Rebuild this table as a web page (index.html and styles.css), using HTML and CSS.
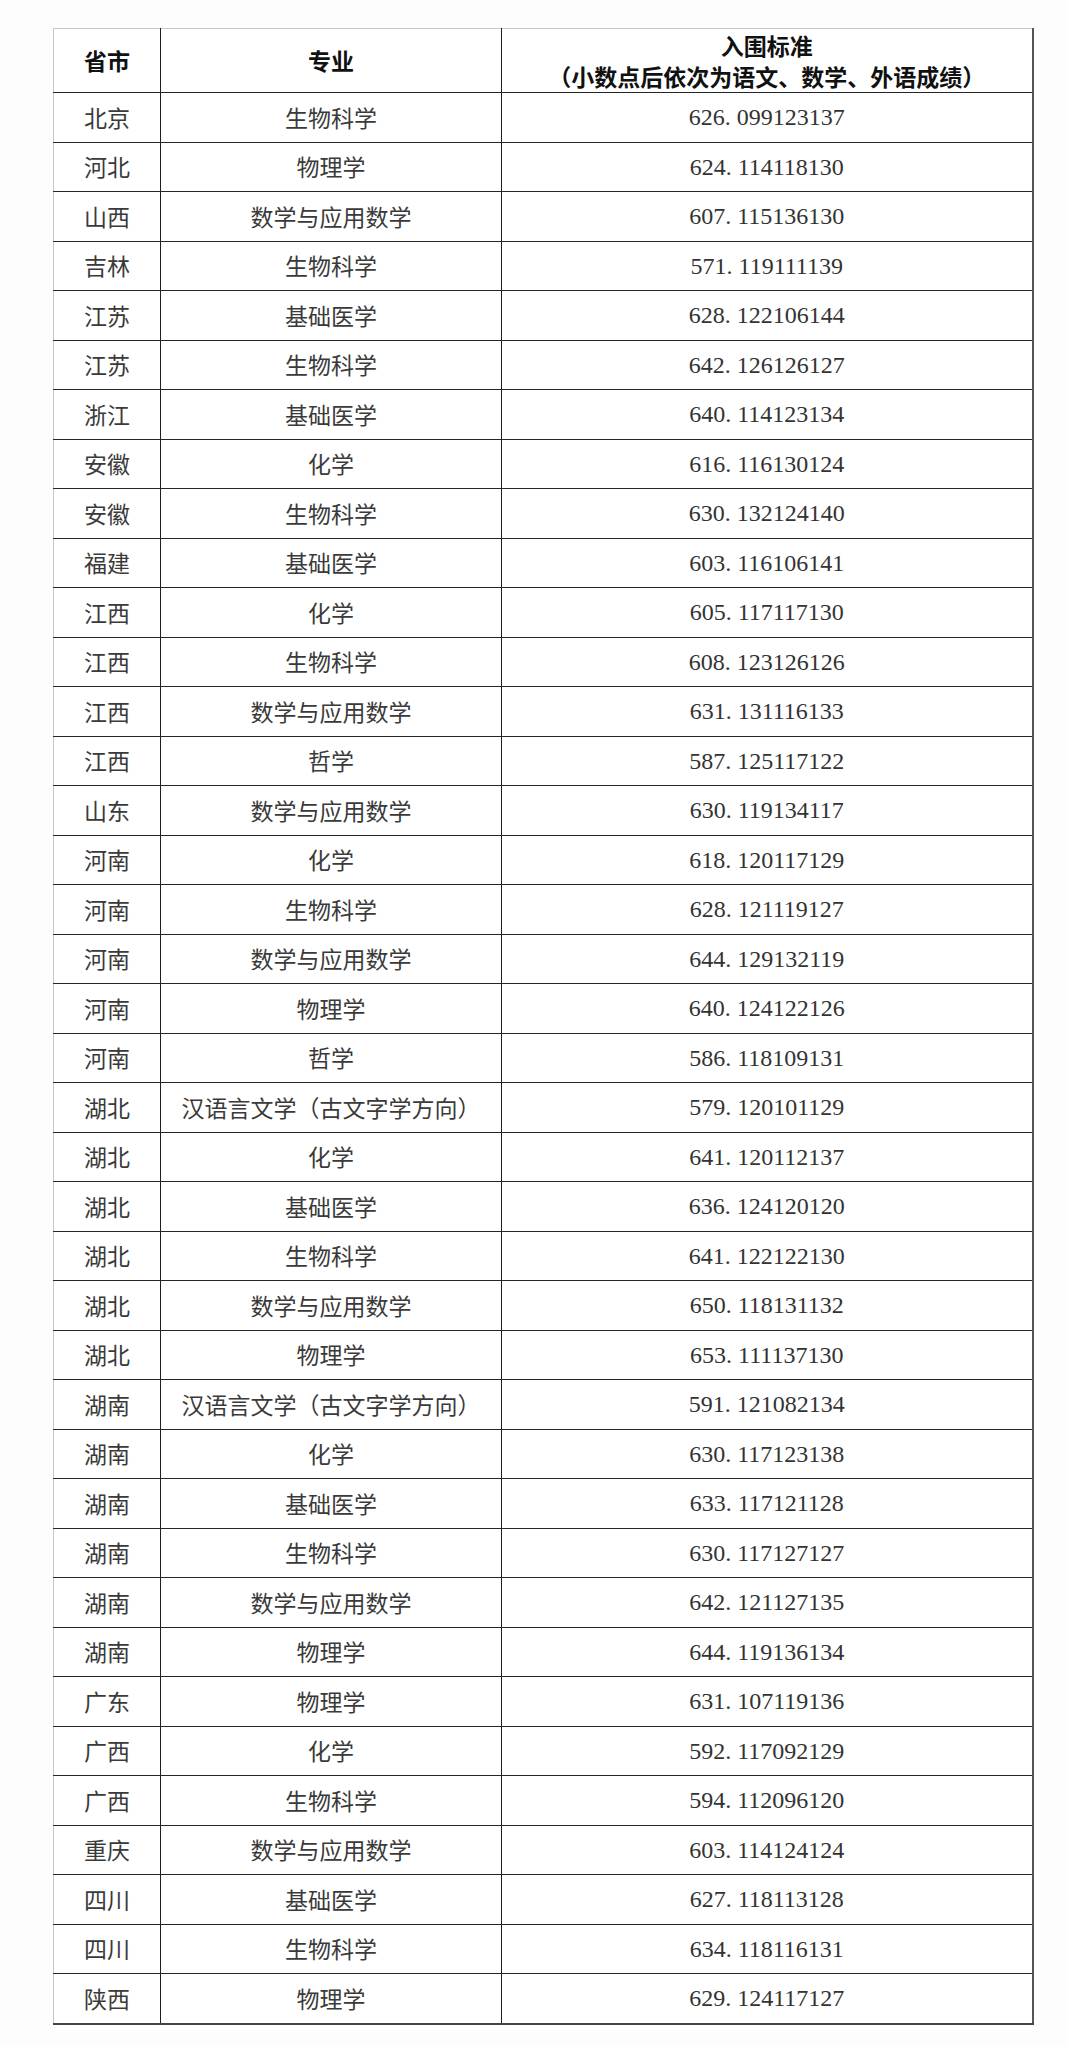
FILE: index.html
```html
<!DOCTYPE html>
<html lang="zh-CN">
<head>
<meta charset="utf-8">
<title>入围标准</title>
<link rel="stylesheet" href="styles.css">
</head>
<body>
<div class="page">
<table class="score-table">
<colgroup>
<col class="c-prov">
<col class="c-major">
<col class="c-score">
</colgroup>
<thead>
<tr>
<th>省市</th>
<th>专业</th>
<th>入围标准<br>（小数点后依次为语文、数学、外语成绩）</th>
</tr>
</thead>
<tbody>
<tr><td>北京</td><td>生物科学</td><td class="num">626<span class="dot">.</span>099123137</td></tr>
<tr><td>河北</td><td>物理学</td><td class="num">624<span class="dot">.</span>114118130</td></tr>
<tr><td>山西</td><td>数学与应用数学</td><td class="num">607<span class="dot">.</span>115136130</td></tr>
<tr><td>吉林</td><td>生物科学</td><td class="num">571<span class="dot">.</span>119111139</td></tr>
<tr><td>江苏</td><td>基础医学</td><td class="num">628<span class="dot">.</span>122106144</td></tr>
<tr><td>江苏</td><td>生物科学</td><td class="num">642<span class="dot">.</span>126126127</td></tr>
<tr><td>浙江</td><td>基础医学</td><td class="num">640<span class="dot">.</span>114123134</td></tr>
<tr><td>安徽</td><td>化学</td><td class="num">616<span class="dot">.</span>116130124</td></tr>
<tr><td>安徽</td><td>生物科学</td><td class="num">630<span class="dot">.</span>132124140</td></tr>
<tr><td>福建</td><td>基础医学</td><td class="num">603<span class="dot">.</span>116106141</td></tr>
<tr><td>江西</td><td>化学</td><td class="num">605<span class="dot">.</span>117117130</td></tr>
<tr><td>江西</td><td>生物科学</td><td class="num">608<span class="dot">.</span>123126126</td></tr>
<tr><td>江西</td><td>数学与应用数学</td><td class="num">631<span class="dot">.</span>131116133</td></tr>
<tr><td>江西</td><td>哲学</td><td class="num">587<span class="dot">.</span>125117122</td></tr>
<tr><td>山东</td><td>数学与应用数学</td><td class="num">630<span class="dot">.</span>119134117</td></tr>
<tr><td>河南</td><td>化学</td><td class="num">618<span class="dot">.</span>120117129</td></tr>
<tr><td>河南</td><td>生物科学</td><td class="num">628<span class="dot">.</span>121119127</td></tr>
<tr><td>河南</td><td>数学与应用数学</td><td class="num">644<span class="dot">.</span>129132119</td></tr>
<tr><td>河南</td><td>物理学</td><td class="num">640<span class="dot">.</span>124122126</td></tr>
<tr><td>河南</td><td>哲学</td><td class="num">586<span class="dot">.</span>118109131</td></tr>
<tr><td>湖北</td><td>汉语言文学（古文字学方向）</td><td class="num">579<span class="dot">.</span>120101129</td></tr>
<tr><td>湖北</td><td>化学</td><td class="num">641<span class="dot">.</span>120112137</td></tr>
<tr><td>湖北</td><td>基础医学</td><td class="num">636<span class="dot">.</span>124120120</td></tr>
<tr><td>湖北</td><td>生物科学</td><td class="num">641<span class="dot">.</span>122122130</td></tr>
<tr><td>湖北</td><td>数学与应用数学</td><td class="num">650<span class="dot">.</span>118131132</td></tr>
<tr><td>湖北</td><td>物理学</td><td class="num">653<span class="dot">.</span>111137130</td></tr>
<tr><td>湖南</td><td>汉语言文学（古文字学方向）</td><td class="num">591<span class="dot">.</span>121082134</td></tr>
<tr><td>湖南</td><td>化学</td><td class="num">630<span class="dot">.</span>117123138</td></tr>
<tr><td>湖南</td><td>基础医学</td><td class="num">633<span class="dot">.</span>117121128</td></tr>
<tr><td>湖南</td><td>生物科学</td><td class="num">630<span class="dot">.</span>117127127</td></tr>
<tr><td>湖南</td><td>数学与应用数学</td><td class="num">642<span class="dot">.</span>121127135</td></tr>
<tr><td>湖南</td><td>物理学</td><td class="num">644<span class="dot">.</span>119136134</td></tr>
<tr><td>广东</td><td>物理学</td><td class="num">631<span class="dot">.</span>107119136</td></tr>
<tr><td>广西</td><td>化学</td><td class="num">592<span class="dot">.</span>117092129</td></tr>
<tr><td>广西</td><td>生物科学</td><td class="num">594<span class="dot">.</span>112096120</td></tr>
<tr><td>重庆</td><td>数学与应用数学</td><td class="num">603<span class="dot">.</span>114124124</td></tr>
<tr><td>四川</td><td>基础医学</td><td class="num">627<span class="dot">.</span>118113128</td></tr>
<tr><td>四川</td><td>生物科学</td><td class="num">634<span class="dot">.</span>118116131</td></tr>
<tr><td>陕西</td><td>物理学</td><td class="num">629<span class="dot">.</span>124117127</td></tr>
</tbody>
</table>
</div>
</body>
</html>
```

FILE: styles.css
```css
html, body {
  margin: 0;
  padding: 0;
  background: #ffffff;
}

.page {
  width: 1068px;
  height: 2046px;
  padding: 28px 0 0 53px;
  box-sizing: border-box;
  background: #fdfdfd;
}

.score-table {
  width: 979px;
  table-layout: fixed;
  border-collapse: collapse;
  background: #ffffff;
  font-family: "Liberation Serif", "Noto Sans CJK SC", serif;
  color: #333333;
  border-top: 1px solid #c8c8c8;
  border-left: 1px solid #c8c8c8;
  border-right: 2px solid #555555;
  border-bottom: 2px solid #444444;
}

.c-prov { width: 107px; }
.c-major { width: 341px; }
.c-score { width: 531px; }

.score-table th,
.score-table td {
  padding: 0;
  text-align: center;
  vertical-align: middle;
  border-bottom: 1px solid #262626;
  border-right: 1px solid #1e1e1e;
}

.score-table th {
  height: 63px;
  font-family: "Noto Sans CJK SC", sans-serif;
  font-weight: 700;
  font-size: 23px;
  line-height: 31px;
  color: #111111;
  border-top: 1px solid #c8c8c8;
}

.score-table td {
  height: 48.5px;
  font-family: "Noto Sans CJK SC", sans-serif;
  font-size: 23px;
  font-weight: 400;
  color: #3a3a3a;
  line-height: 1;
}

.score-table td.num {
  font-family: "Liberation Serif", serif;
  font-size: 24px;
  color: #333333;
}

.dot {
  padding-right: 0.25em;
}
```
